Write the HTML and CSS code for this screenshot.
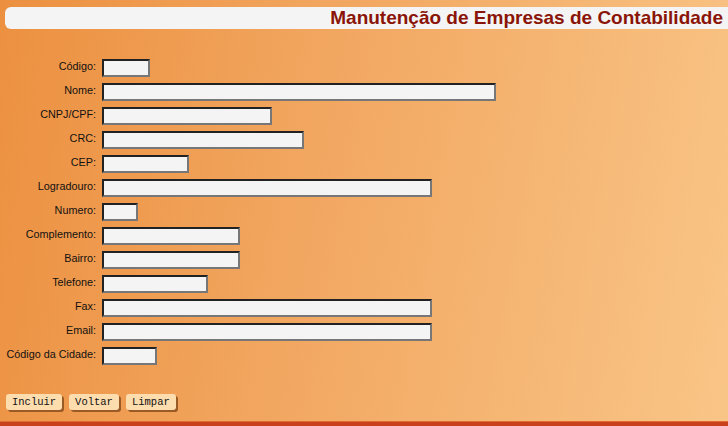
FILE: index.html
```html
<!DOCTYPE html>
<html lang="pt">
<head>
<meta charset="utf-8">
<title>Manutenção de Empresas de Contabilidade</title>
<link rel="stylesheet" href="styles.css">
</head>
<body>
<div class="page">
  <div class="header"><h1 class="title">Manutenção de Empresas de Contabilidade</h1></div>
  <form class="form">
    <label class="lbl">Código:</label><input class="fld w-codigo" type="text">
    <label class="lbl">Nome:</label><input class="fld w-nome" type="text">
    <label class="lbl">CNPJ/CPF:</label><input class="fld w-cnpj" type="text">
    <label class="lbl">CRC:</label><input class="fld w-crc" type="text">
    <label class="lbl">CEP:</label><input class="fld w-cep" type="text">
    <label class="lbl">Logradouro:</label><input class="fld w-long" type="text">
    <label class="lbl">Numero:</label><input class="fld w-numero" type="text">
    <label class="lbl">Complemento:</label><input class="fld w-med" type="text">
    <label class="lbl">Bairro:</label><input class="fld w-med" type="text">
    <label class="lbl">Telefone:</label><input class="fld w-tel" type="text">
    <label class="lbl">Fax:</label><input class="fld w-long" type="text">
    <label class="lbl">Email:</label><input class="fld w-long" type="text">
    <label class="lbl">Código da Cidade:</label><input class="fld w-cidade" type="text">
  </form>
  <div class="buttons">
    <button class="btn" type="button">Incluir</button>
    <button class="btn" type="button">Voltar</button>
    <button class="btn" type="button">Limpar</button>
  </div>
  <div class="footer"></div>
</div>
</body>
</html>
```
FILE: styles.css
```css
html, body {
  margin: 0;
  padding: 0;
}
body {
  width: 728px;
  height: 426px;
  overflow: hidden;
  font-family: "Liberation Sans", Arial, sans-serif;
}
.page {
  height: 426px;
  display: flex;
  flex-direction: column;
  background: linear-gradient(100deg, #ec9040 0%, #f2a862 45%, #f9c587 100%);
}
.header {
  margin: 7px 0 0 5px;
  height: 22px;
  background: #f4f4f4;
  border-radius: 6px 0 0 6px;
  display: flex;
  align-items: center;
  justify-content: flex-end;
  padding-right: 5px;
}
.title {
  margin: 0;
  font-size: 19px;
  font-weight: bold;
  color: #8a1408;
  line-height: 22px;
  white-space: nowrap;
}
.form {
  margin: 30px 0 0 0;
  display: grid;
  grid-template-columns: 96px auto;
  column-gap: 6px;
  row-gap: 6px;
  justify-items: start;
  align-items: start;
}
.lbl {
  justify-self: end;
  font-size: 10.8px;
  color: #111;
  line-height: 14px;
}
.fld {
  box-sizing: border-box;
  height: 18px;
  margin: 0;
  padding: 0 2px;
  background: #f4f4f4;
  border-style: solid;
  border-width: 2px;
  border-color: #222 #777 #777 #222;
  font-size: 12px;
}
.w-codigo { width: 48px; }
.w-nome { width: 394px; }
.w-cnpj { width: 170px; }
.w-crc { width: 202px; }
.w-cep { width: 87px; }
.w-long { width: 330px; }
.w-numero { width: 36px; }
.w-med { width: 138px; }
.w-tel { width: 106px; }
.w-cidade { width: 55px; }
.buttons {
  margin: 29px 0 0 6px;
  display: flex;
  gap: 7px;
}
.btn {
  height: 16px;
  padding: 0 6px;
  margin: 0;
  font-family: "Liberation Mono", "Courier New", monospace;
  font-size: 10.5px;
  line-height: 12px;
  color: #111;
  background: #fddcae;
  border: none;
  border-radius: 3px;
  box-shadow: 2px 2px 0 #9a5a26;
}
.footer {
  margin-top: auto;
  height: 4px;
  background: #c9401c;
  border-top: 1px solid #e06a30;
}
```
